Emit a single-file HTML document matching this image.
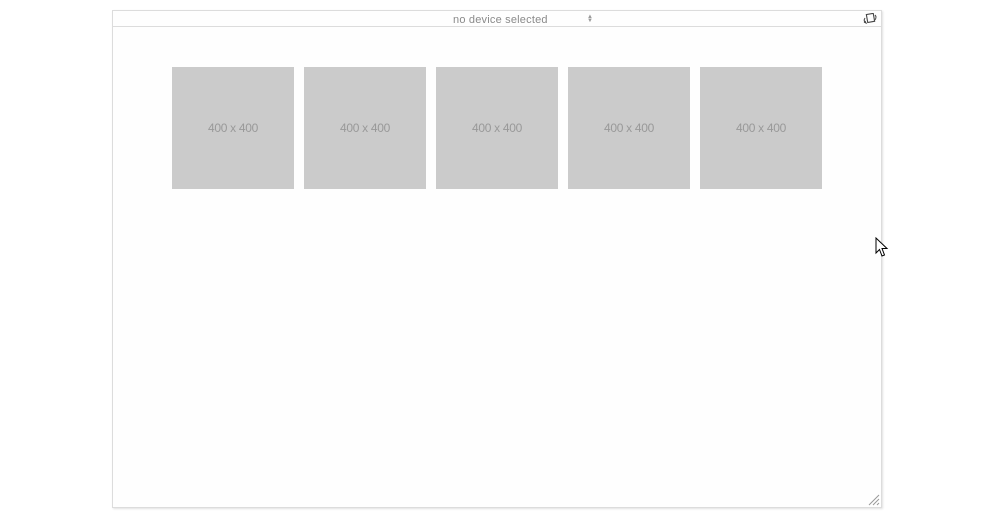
<!DOCTYPE html>
<html><head><style>
html,body{margin:0;padding:0;background:#fff;width:1000px;height:520px;overflow:hidden;font-family:"Liberation Sans",sans-serif}
.frame{position:absolute;left:112px;top:10px;width:768px;height:496px;border:1px solid #dcdcdc;background:#fefefe;box-shadow:1px 1px 2px rgba(0,0,0,0.12)}
.bar{position:absolute;left:0;top:0;width:768px;height:15px;border-bottom:1px solid #dcdcdc}
.sel{position:absolute;left:340px;top:3px;font-size:11px;color:#8a8a8a;letter-spacing:0.2px}
.arr{position:absolute;left:474px;top:4px;font-size:6px;color:#999;line-height:4px}
.box{position:absolute;top:67px;width:122px;height:122px;background:#cbcbcb;color:#999;font-size:12px;display:flex;align-items:center;justify-content:center;letter-spacing:-0.3px}
</style></head><body>
<div class="frame">
<div class="bar"><span class="sel">no device selected</span><span class="arr">▲<br>▼</span>
<svg style="position:absolute;left:748px;top:2px" width="18" height="12" viewBox="0 0 18 12"><rect x="6" y="1" width="7" height="8" fill="none" stroke="#444" stroke-width="1.1" transform="rotate(-10 9 5)"/><path d="M4 5 Q2 8 5 10 M3 9 L5 10 L4 8 M14 2 Q16 4 14 7" fill="none" stroke="#444" stroke-width="1"/></svg>
</div>
<svg style="position:absolute;right:1px;bottom:1px" width="12" height="12"><path d="M11 1L1 11M11 5L5 11M11 9L9 11" stroke="#999" stroke-width="1"/></svg>
</div>
<div class="box" style="left:172px">400 x 400</div>
<div class="box" style="left:304px">400 x 400</div>
<div class="box" style="left:436px">400 x 400</div>
<div class="box" style="left:568px">400 x 400</div>
<div class="box" style="left:700px">400 x 400</div>
<svg style="position:absolute;left:875px;top:237px" width="14" height="22" viewBox="0 0 14 22"><path d="M1 1 L1 16 L4.5 12.5 L7 19 L9.5 18 L7 11.5 L12 11.5 Z" fill="#fff" stroke="#000" stroke-width="1"/></svg>
</body></html>
